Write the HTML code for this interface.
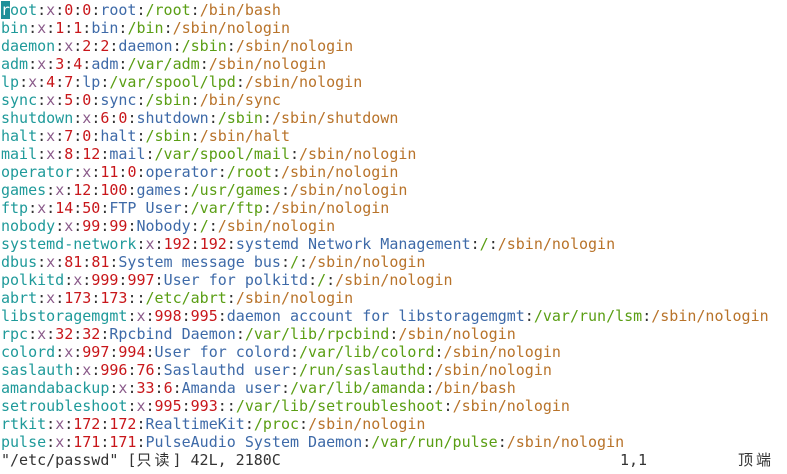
<!DOCTYPE html>
<html><head><meta charset="utf-8"><style>
body{margin:0;background:#fff;width:787px;height:474px;overflow:hidden}
pre{margin:0;padding:1px 0 0 1px;font:15px/18px "DejaVu Sans Mono","Noto Sans CJK SC",monospace;color:#333}
.u{color:#1f9a9a}.x{color:#8a5a8a}.n{color:#c8161a}.g{color:#3e6aa8}.h{color:#5a9e14}.s{color:#b8732a}.c{color:#333}
.cur{background:#1f8f99;color:#fff}
.st{position:relative}
.w{display:inline-block;width:18px}
</style></head><body><pre><span class="u"><span class="cur">r</span>oot</span>:<span class="x">x</span>:<span class="n">0</span>:<span class="n">0</span>:<span class="g">root</span>:<span class="h">/root</span>:<span class="s">/bin/bash</span>
<span class="u">bin</span>:<span class="x">x</span>:<span class="n">1</span>:<span class="n">1</span>:<span class="g">bin</span>:<span class="h">/bin</span>:<span class="s">/sbin/nologin</span>
<span class="u">daemon</span>:<span class="x">x</span>:<span class="n">2</span>:<span class="n">2</span>:<span class="g">daemon</span>:<span class="h">/sbin</span>:<span class="s">/sbin/nologin</span>
<span class="u">adm</span>:<span class="x">x</span>:<span class="n">3</span>:<span class="n">4</span>:<span class="g">adm</span>:<span class="h">/var/adm</span>:<span class="s">/sbin/nologin</span>
<span class="u">lp</span>:<span class="x">x</span>:<span class="n">4</span>:<span class="n">7</span>:<span class="g">lp</span>:<span class="h">/var/spool/lpd</span>:<span class="s">/sbin/nologin</span>
<span class="u">sync</span>:<span class="x">x</span>:<span class="n">5</span>:<span class="n">0</span>:<span class="g">sync</span>:<span class="h">/sbin</span>:<span class="s">/bin/sync</span>
<span class="u">shutdown</span>:<span class="x">x</span>:<span class="n">6</span>:<span class="n">0</span>:<span class="g">shutdown</span>:<span class="h">/sbin</span>:<span class="s">/sbin/shutdown</span>
<span class="u">halt</span>:<span class="x">x</span>:<span class="n">7</span>:<span class="n">0</span>:<span class="g">halt</span>:<span class="h">/sbin</span>:<span class="s">/sbin/halt</span>
<span class="u">mail</span>:<span class="x">x</span>:<span class="n">8</span>:<span class="n">12</span>:<span class="g">mail</span>:<span class="h">/var/spool/mail</span>:<span class="s">/sbin/nologin</span>
<span class="u">operator</span>:<span class="x">x</span>:<span class="n">11</span>:<span class="n">0</span>:<span class="g">operator</span>:<span class="h">/root</span>:<span class="s">/sbin/nologin</span>
<span class="u">games</span>:<span class="x">x</span>:<span class="n">12</span>:<span class="n">100</span>:<span class="g">games</span>:<span class="h">/usr/games</span>:<span class="s">/sbin/nologin</span>
<span class="u">ftp</span>:<span class="x">x</span>:<span class="n">14</span>:<span class="n">50</span>:<span class="g">FTP User</span>:<span class="h">/var/ftp</span>:<span class="s">/sbin/nologin</span>
<span class="u">nobody</span>:<span class="x">x</span>:<span class="n">99</span>:<span class="n">99</span>:<span class="g">Nobody</span>:<span class="h">/</span>:<span class="s">/sbin/nologin</span>
<span class="u">systemd-network</span>:<span class="x">x</span>:<span class="n">192</span>:<span class="n">192</span>:<span class="g">systemd Network Management</span>:<span class="h">/</span>:<span class="s">/sbin/nologin</span>
<span class="u">dbus</span>:<span class="x">x</span>:<span class="n">81</span>:<span class="n">81</span>:<span class="g">System message bus</span>:<span class="h">/</span>:<span class="s">/sbin/nologin</span>
<span class="u">polkitd</span>:<span class="x">x</span>:<span class="n">999</span>:<span class="n">997</span>:<span class="g">User for polkitd</span>:<span class="h">/</span>:<span class="s">/sbin/nologin</span>
<span class="u">abrt</span>:<span class="x">x</span>:<span class="n">173</span>:<span class="n">173</span>::<span class="h">/etc/abrt</span>:<span class="s">/sbin/nologin</span>
<span class="u">libstoragemgmt</span>:<span class="x">x</span>:<span class="n">998</span>:<span class="n">995</span>:<span class="g">daemon account for libstoragemgmt</span>:<span class="h">/var/run/lsm</span>:<span class="s">/sbin/nologin</span>
<span class="u">rpc</span>:<span class="x">x</span>:<span class="n">32</span>:<span class="n">32</span>:<span class="g">Rpcbind Daemon</span>:<span class="h">/var/lib/rpcbind</span>:<span class="s">/sbin/nologin</span>
<span class="u">colord</span>:<span class="x">x</span>:<span class="n">997</span>:<span class="n">994</span>:<span class="g">User for colord</span>:<span class="h">/var/lib/colord</span>:<span class="s">/sbin/nologin</span>
<span class="u">saslauth</span>:<span class="x">x</span>:<span class="n">996</span>:<span class="n">76</span>:<span class="g">Saslauthd user</span>:<span class="h">/run/saslauthd</span>:<span class="s">/sbin/nologin</span>
<span class="u">amandabackup</span>:<span class="x">x</span>:<span class="n">33</span>:<span class="n">6</span>:<span class="g">Amanda user</span>:<span class="h">/var/lib/amanda</span>:<span class="s">/bin/bash</span>
<span class="u">setroubleshoot</span>:<span class="x">x</span>:<span class="n">995</span>:<span class="n">993</span>::<span class="h">/var/lib/setroubleshoot</span>:<span class="s">/sbin/nologin</span>
<span class="u">rtkit</span>:<span class="x">x</span>:<span class="n">172</span>:<span class="n">172</span>:<span class="g">RealtimeKit</span>:<span class="h">/proc</span>:<span class="s">/sbin/nologin</span>
<span class="u">pulse</span>:<span class="x">x</span>:<span class="n">171</span>:<span class="n">171</span>:<span class="g">PulseAudio System Daemon</span>:<span class="h">/var/run/pulse</span>:<span class="s">/sbin/nologin</span>
<span class="st">"/etc/passwd" [<span class="w">只</span><span class="w">读</span>] 42L, 2180C<span style="position:absolute;left:619px;top:0;white-space:pre">1,1</span><span style="position:absolute;left:737px;top:0;white-space:pre"><span class="w">顶</span><span class="w">端</span></span></span></pre></body></html>
